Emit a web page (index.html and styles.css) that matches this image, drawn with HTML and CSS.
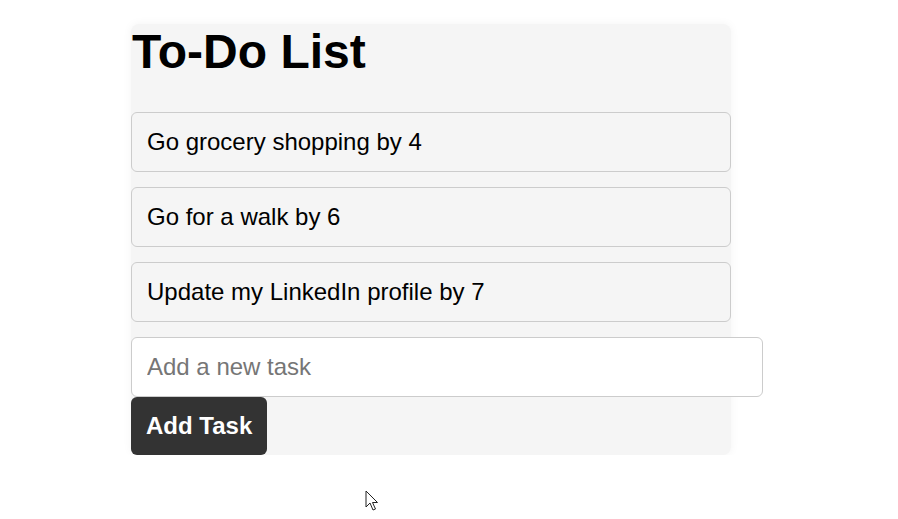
FILE: index.html
```html
<!DOCTYPE html>
<html lang="en">
<head>
<meta charset="utf-8">
<title>To-Do List</title>
<link rel="stylesheet" href="styles.css">
</head>
<body>
<div class="container">
  <h1 class="title">To-Do List</h1>
  <ul class="task-list">
    <li class="task">Go grocery shopping by 4</li>
    <li class="task">Go for a walk by 6</li>
    <li class="task">Update my LinkedIn profile by 7</li>
  </ul>
  <input class="task-input" type="text" placeholder="Add a new task">
  <button class="add-btn">Add Task</button>
</div>
<svg class="cursor" width="14" height="22" viewBox="0 0 14 22">
  <path d="M1 1 L1 17 L5 13 L8 20 L10.5 19 L7.5 12.5 L12.5 12.5 Z" fill="#fff" stroke="#222" stroke-width="1" stroke-linejoin="round"/>
</svg>
</body>
</html>
```
FILE: styles.css
```css
html, body {
  margin: 0;
  padding: 0;
  background: #ffffff;
}
body {
  font-family: "Liberation Sans", Arial, sans-serif;
  color: #000;
  padding-top: 24px;
  padding-left: 131px;
}
.container {
  width: 600px;
  background: #f5f5f5;
  border-radius: 8px;
  box-shadow: 0 0 10px rgba(0, 0, 0, 0.05);
}
.title {
  margin: 0;
  padding: 0 0 0 1px;
  font-size: 48px;
  font-weight: bold;
  line-height: 55px;
  height: 88px;
}
.task-list {
  list-style: none;
  margin: 0;
  padding: 0;
}
.task {
  font-size: 24px;
  line-height: 28px;
  padding: 15px;
  margin-bottom: 15px;
  border: 1px solid #cccccc;
  border-radius: 6px;
  background: #f5f5f5;
}
.task-input {
  display: block;
  width: 600px;
  margin: 0;
  padding: 15px;
  font-family: "Liberation Sans", Arial, sans-serif;
  font-size: 24px;
  line-height: 28px;
  height: 28px;
  border: 1px solid #cccccc;
  border-radius: 6px;
  background: #ffffff;
  color: #000;
  outline: none;
}
.task-input::placeholder {
  color: #767676;
}
.add-btn {
  display: block;
  margin: 0;
  padding: 15px;
  font-family: "Liberation Sans", Arial, sans-serif;
  font-size: 24px;
  font-weight: bold;
  line-height: 28px;
  color: #ffffff;
  background: #333333;
  border: none;
  border-radius: 6px;
}
.cursor {
  position: absolute;
  left: 365px;
  top: 490px;
}
```
